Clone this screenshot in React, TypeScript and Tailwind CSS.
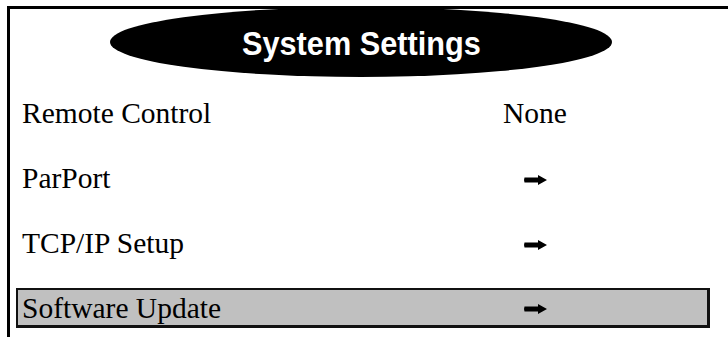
import React from "react";

function Arrow() {
    return (
        <svg width="23" height="10" viewBox="0 0 23 10" className="block mt-[3px]">
            <path d="M0.5 2.6 H14 V0 L23 5 L14 10 V7.4 H0.5 L0 5 Z" fill="black"/>
        </svg>
    );
}

const rows = [
    {label: "Remote Control", value: "None"},
    {label: "ParPort", value: null},
    {label: "TCP/IP Setup", value: null},
    {label: "Software Update", value: null, selected: true},
];

function Row({label, value, selected}: {label: string; value: string | null; selected?: boolean}) {
    return (
        <div
            className={
                "w-[694px] h-[40px] flex items-center border-2 " +
                (selected ? "bg-[#c0c0c0] border-[#111] border-r-[3px] border-b-[3px]" : "border-transparent")
            }
        >
            <div className="w-[467px] pl-[4px] text-[29.5px] leading-[36px] text-black whitespace-nowrap">{label}</div>
            <div className="w-[100px] flex justify-center text-[29.5px] leading-[36px] text-black">
                {value ? value : <Arrow/>}
            </div>
        </div>
    );
}

export default function App() {
    return (
        <div className="w-[728px] h-[337px] bg-white overflow-hidden" style={{fontFamily: '"Liberation Serif", "Times New Roman", serif'}}>
            <div className="mt-[6px] ml-[7px] h-[331px] border-t-[3px] border-l-[3px] border-black">
                <div className="ml-[100px] -mt-[2px] w-[502px] h-[70px] rounded-[50%] bg-black flex items-center justify-center">
                    <span
                        className="text-white font-bold text-[33px] leading-none mt-[2px] scale-x-[0.93]"
                        style={{fontFamily: '"Liberation Sans", Arial, sans-serif'}}
                    >
                        System Settings
                    </span>
                </div>
                <div className="ml-[6px] mt-[16px] flex flex-col gap-[25px]">
                    {rows.map((r, i) => (
                        <Row key={i} label={r.label} value={r.value} selected={r.selected}/>
                    ))}
                </div>
            </div>
        </div>
    );
}
